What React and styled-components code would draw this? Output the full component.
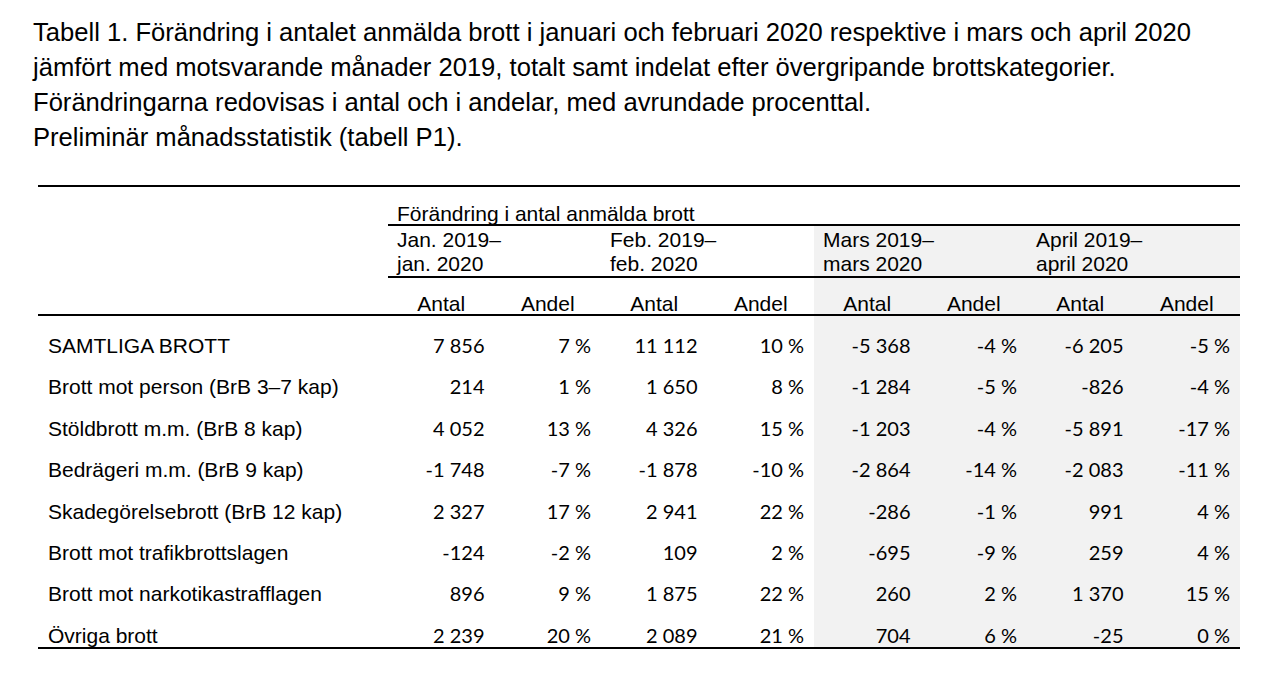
import styled, { createGlobalStyle } from "styled-components"

const GlobalStyle = createGlobalStyle`
  body {
    margin: 0;
    background: #ffffff;
    color: #000000;
    font-family: "Liberation Sans", Arial, sans-serif;
  }
`

const Page = styled.div`
  padding: 15px 0 0 33px;
`

const Caption = styled.p`
  margin: 0;
  font-size: 25.6px;
  line-height: 35px;
`

const Table = styled.table`
  margin: 30px 0 0 5px;
  width: 1202px;
  table-layout: fixed;
  border-collapse: separate;
  border-spacing: 0;
  border-top: 2px solid #000;
  border-bottom: 2px solid #000;
  font-size: 21px;
`

const HeadRow = styled.tr`
  height: ${(p) => p.$h}px;
`

const GroupCell = styled.th`
  padding: 0 0 0 9px;
  font-weight: normal;
  text-align: left;
  vertical-align: bottom;
  line-height: ${(p) => (p.$twoLine ? 24 : 20)}px;
  border-bottom: ${(p) => (p.$rule ? "2px solid #000" : "none")};
  background: ${(p) => (p.$shade ? "#f2f2f2" : "transparent")};
  white-space: nowrap;
`

const ColCell = styled.th`
  padding: 0;
  font-weight: normal;
  text-align: center;
  vertical-align: bottom;
  line-height: 20px;
  border-bottom: 2px solid #000;
  background: ${(p) => (p.$shade ? "#f2f2f2" : "transparent")};
`

const DataRow = styled.tr`
  height: 41.4px;
`

const Label = styled.td`
  padding: 19px 0 0 10px;
  vertical-align: baseline;
  line-height: 20px;
  white-space: nowrap;
`

const Num = styled.td`
  padding: 19px 10px 0 0;
  vertical-align: baseline;
  text-align: right;
  line-height: 20px;
  font-family: Lato, "Open Sans", sans-serif;
  font-size: 20px;
  white-space: nowrap;
  background: ${(p) => (p.$shade ? "#f2f2f2" : "transparent")};
`

const periods = [
  ["Jan. 2019–", "jan. 2020"],
  ["Feb. 2019–", "feb. 2020"],
  ["Mars 2019–", "mars 2020"],
  ["April 2019–", "april 2020"],
]

const rows = [
  ["SAMTLIGA BROTT", "7 856", "7 %", "11 112", "10 %", "-5 368", "-4 %", "-6 205", "-5 %"],
  ["Brott mot person (BrB 3–7 kap)", "214", "1 %", "1 650", "8 %", "-1 284", "-5 %", "-826", "-4 %"],
  ["Stöldbrott m.m. (BrB 8 kap)", "4 052", "13 %", "4 326", "15 %", "-1 203", "-4 %", "-5 891", "-17 %"],
  ["Bedrägeri m.m. (BrB 9 kap)", "-1 748", "-7 %", "-1 878", "-10 %", "-2 864", "-14 %", "-2 083", "-11 %"],
  ["Skadegörelsebrott (BrB 12 kap)", "2 327", "17 %", "2 941", "22 %", "-286", "-1 %", "991", "4 %"],
  ["Brott mot trafikbrottslagen", "-124", "-2 %", "109", "2 %", "-695", "-9 %", "259", "4 %"],
  ["Brott mot narkotikastrafflagen", "896", "9 %", "1 875", "22 %", "260", "2 %", "1 370", "15 %"],
  ["Övriga brott", "2 239", "20 %", "2 089", "21 %", "704", "6 %", "-25", "0 %"],
]

const App = () => {
  return (
    <Page>
      <GlobalStyle />
      <Caption>
        Tabell 1. Förändring i antalet anmälda brott i januari och februari 2020 respektive i mars och april 2020
        <br />
        jämfört med motsvarande månader 2019, totalt samt indelat efter övergripande brottskategorier.
        <br />
        Förändringarna redovisas i antal och i andelar, med avrundade procenttal.
        <br />
        Preliminär månadsstatistik (tabell P1).
      </Caption>
      <Table>
        <colgroup>
          <col style={{ width: 350 }} />
          {Array.from({ length: 8 }).map((_, i) => (
            <col key={i} />
          ))}
        </colgroup>
        <thead>
          <HeadRow $h={39}>
            <GroupCell />
            <GroupCell colSpan={8} $rule>
              Förändring i antal anmälda brott
            </GroupCell>
          </HeadRow>
          <HeadRow $h={52}>
            <GroupCell />
            {periods.map(([a, b], i) => (
              <GroupCell key={a} colSpan={2} $rule $twoLine $shade={i >= 2}>
                {a}
                <br />
                {b}
              </GroupCell>
            ))}
          </HeadRow>
          <HeadRow $h={38}>
            <ColCell />
            {Array.from({ length: 8 }).map((_, i) => (
              <ColCell key={i} $shade={i >= 4}>
                {i % 2 === 0 ? "Antal" : "Andel"}
              </ColCell>
            ))}
          </HeadRow>
        </thead>
        <tbody>
          {rows.map(([label, ...vals]) => (
            <DataRow key={label}>
              <Label>{label}</Label>
              {vals.map((v, i) => (
                <Num key={i} $shade={i >= 4}>
                  {v.replace(/ /g, "\u00a0")}
                </Num>
              ))}
            </DataRow>
          ))}
        </tbody>
      </Table>
    </Page>
  )
}

export default App
